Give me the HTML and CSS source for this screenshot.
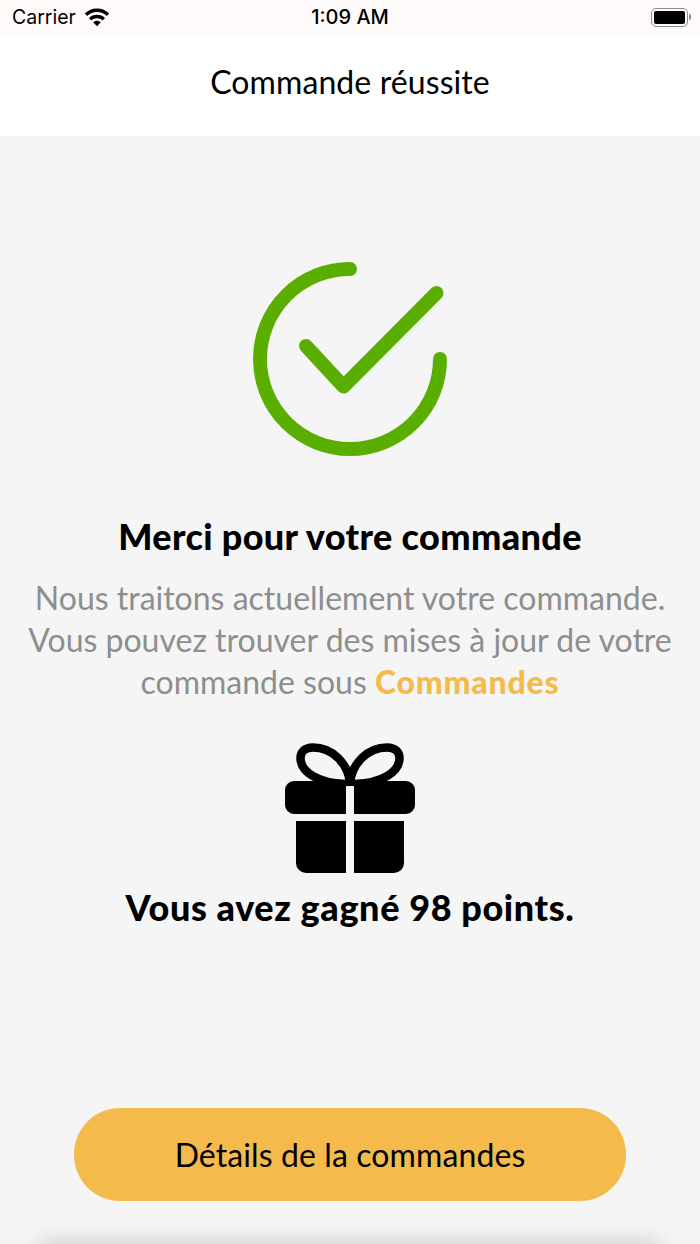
FILE: index.html
```html
<!doctype html>
<html lang="fr">
<head>
    <meta charset="UTF-8">
    <title>Commande réussite</title>
    <link rel="stylesheet" href="styles.css">
</head>
<body>
<div class="page">
    <div class="statusBar">
        <div class="statusLeft">
            <span>Carrier</span>
            <svg class="wifi" width="26" height="19" viewBox="0 0 26 19">
                <path d="M13 .5C8.200 .5 3.900 2.400 .8 5.500L3.200 8C5.700 5.500 9.200 4 13 4s7.300 1.500 9.800 4l2.400-2.500C22.100 2.400 17.800 .5 13 .5z"/>
                <path d="M13 6.700c-3.100 0-5.900 1.200-8 3.200l2.400 2.500c1.400-1.400 3.400-2.200 5.600-2.200s4.200.8 5.600 2.200l2.400-2.500c-2.100-2-4.900-3.200-8-3.200z"/>
                <path d="M13 12.700c-1.500 0-2.800.6-3.800 1.500L13 18.200l3.800-4c-1-.9-2.300-1.500-3.800-1.500z"/>
            </svg>
        </div>
        <div class="statusTime">1:09 AM</div>
        <div class="battery"><div class="batteryFill"></div></div>
    </div>
    <div class="navBar">Commande réussite</div>
    <div class="content">
        <svg class="checkIcon" width="220" height="220" viewBox="240 250 220 220">
            <path d="M350 269A90 90 0 1 0 440 359" fill="none" stroke="#5aae00" stroke-width="14" stroke-linecap="round"/>
            <path d="M306 346L343.500 386.500L436.500 293" fill="none" stroke="#5aae00" stroke-width="14" stroke-linecap="round" stroke-linejoin="round"/>
        </svg>
        <h1 class="thanks">Merci pour votre commande</h1>
        <p class="message">Nous traitons actuellement votre commande.<br>Vous pouvez trouver des mises à jour de votre<br>commande sous <b class="orderLink">Commandes</b></p>
        <svg class="giftIcon" width="130" height="131" viewBox="0 0 130 131">
            <path d="M65 40C63 20 47 4.500 28 4.500C19 4.500 15.500 10 15.500 15C15.500 29 33 40 60 41" fill="none" stroke="#000" stroke-width="8.500"/>
            <path d="M65 40C67 20 83 4.500 102 4.500C111 4.500 114.500 10 114.500 15C114.500 29 97 40 70 41" fill="none" stroke="#000" stroke-width="8.500"/>
            <path d="M9 38H121A9 9 0 0 1 130 47V62A9 9 0 0 1 121 71H69V43H61V71H9A9 9 0 0 1 0 62V47A9 9 0 0 1 9 38z"/>
            <path d="M11 78H61V130H21A10 10 0 0 1 11 120zM69 78H119V120A10 10 0 0 1 109 130H69z"/>
        </svg>
        <div class="points">Vous avez gagné 98 points.</div>
        <button class="detailsBtn">Détails de la commandes</button>
    </div>
    <div class="bottomSheet"></div>
</div>
</body>
</html>
```
FILE: styles.css
```css
* {
    margin: 0;
    padding: 0;
    box-sizing: border-box;
}
body {
    font-family: "Lato", "Noto Sans", sans-serif;
    color: #000;
}
.page {
    width: 700px;
    height: 1244px;
    position: relative;
    overflow: hidden;
    display: flex;
    flex-direction: column;
    background: #f5f5f5;
}
.statusBar {
    height: 34px;
    background: #fffafa;
    display: grid;
    grid-template-columns: 1fr auto 1fr;
    align-items: center;
    padding: 0 12px;
    font-family: "Inter", sans-serif;
    font-size: 19.500px;
}
.statusLeft {
    display: flex;
    align-items: center;
    gap: 8px;
}
.statusTime {
    font-size: 20px;
    font-weight: 500;
}
.battery {
    justify-self: end;
    width: 37px;
    height: 19px;
    border: 1.500px solid #8a8a8a;
    border-radius: 5px;
    padding: 2px;
    position: relative;
}
.battery::after {
    content: "";
    position: absolute;
    right: -4px;
    top: 5px;
    width: 2px;
    height: 6px;
    background: #8a8a8a;
    border-radius: 0 2px 2px 0;
}
.batteryFill {
    height: 100%;
    background: #000;
    border-radius: 2px;
}
.navBar {
    height: 102px;
    background: #fff;
    display: flex;
    align-items: center;
    justify-content: center;
    font-size: 32px;
    letter-spacing: 0.100px;
    padding-bottom: 7px;
}
.content {
    flex: 1;
    display: flex;
    flex-direction: column;
    align-items: center;
    padding-top: 114px;
}
.checkIcon {
    display: block;
}
.thanks {
    font-size: 36px;
    font-weight: 900;
    letter-spacing: 0.360px;
    line-height: 42px;
    margin-top: 45px;
}
.message {
    font-size: 32px;
    line-height: 42px;
    color: #8e8e8e;
    text-align: center;
    margin-top: 20px;
}
.orderLink {
    color: #f4bb4c;
    font-weight: 900;
    letter-spacing: 0.800px;
}
.giftIcon {
    display: block;
    margin-top: 40px;
}
.points {
    font-size: 36px;
    font-weight: 900;
    letter-spacing: 0.600px;
    line-height: 42px;
    margin-top: 12px;
}
.detailsBtn {
    width: 552px;
    height: 93px;
    margin-top: 180px;
    border: none;
    border-radius: 46px;
    background: #f4bb4c;
    font-family: inherit;
    font-size: 32px;
    letter-spacing: 0.100px;
    color: #000;
}
.bottomSheet {
    position: absolute;
    left: 40px;
    right: 40px;
    bottom: -30px;
    height: 30px;
    box-shadow: 0 0 24px rgba(0, 0, 0, 0.2);
}
```
